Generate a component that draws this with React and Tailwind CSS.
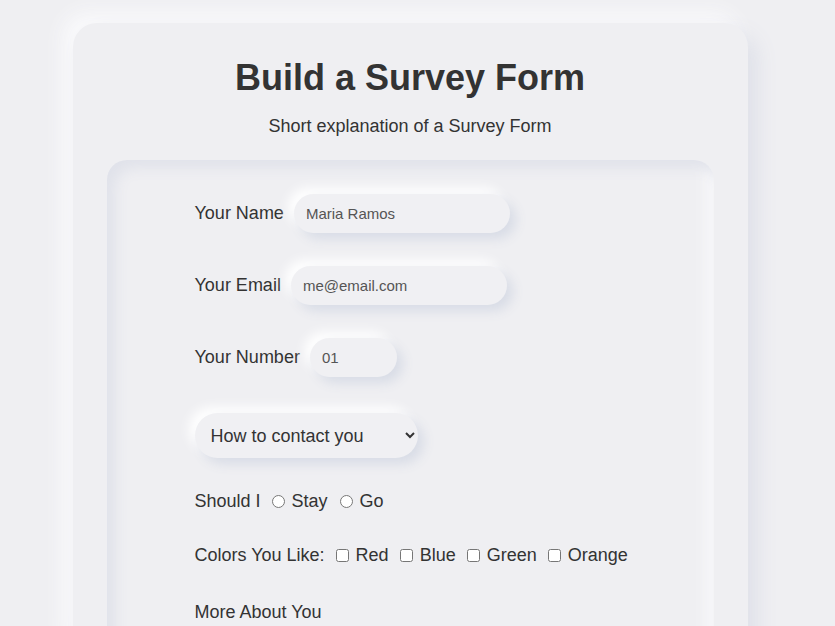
import { useState } from 'react';

const raised = 'shadow-[6px_6px_12px_#d8dce6,-6px_-6px_12px_#ffffff]';

function TextRow({ label, type, value, width }) {
  return (
    <div className="flex items-center">
      <label className="text-[18px] text-[#333] mr-[10px]">{label}</label>
      <input
        type={type}
        defaultValue={value}
        className={`h-[39px] ${width} rounded-full bg-[#f0f0f3] px-[12px] text-[15px] text-[#555] outline-none ${raised}`}
      />
    </div>
  );
}

export default function App() {
  const [contact, setContact] = useState('');

  return (
    <div className="min-h-screen bg-[#efeff2] pt-[23px] pr-[15px] flex justify-center font-['Liberation_Sans',Arial,sans-serif] text-[#333] overflow-hidden">
      <div className="w-[675px] h-[640px] rounded-[24px] bg-[#efeff2] px-[34px] pt-[34px] shadow-[10px_10px_20px_#dfe1e9,-10px_-10px_20px_#fafafc]">
        <h1 className="text-center text-[36px] font-bold leading-[42px] text-[#333]">Build a Survey Form</h1>
        <p className="text-center text-[18px] mt-[14px] text-[#333]">Short explanation of a Survey Form</p>

        <form className="mt-[20px] h-[600px] rounded-[20px] bg-[#efeff2] pl-[88px] pt-[34px] flex flex-col items-start gap-[33px] shadow-[inset_8px_8px_14px_#e0e2ea,inset_-8px_-8px_14px_#f8f8fa]">
          <TextRow label="Your Name" type="text" value="Maria Ramos" width="w-[216px]" />
          <TextRow label="Your Email" type="email" value="me@email.com" width="w-[216px]" />
          <TextRow label="Your Number" type="text" value="01" width="w-[87px]" />

          <select
            value={contact}
            onChange={(e) => setContact(e.target.value)}
            className={`mt-[3px] h-[45px] w-[223px] rounded-full bg-[#f0f0f3] pl-[12px] pr-[10px] text-[18px] text-[#333] outline-none ${raised}`}
          >
            <option value="">How to contact you</option>
            <option value="email">Email</option>
            <option value="phone">Phone</option>
          </select>

          <div className="flex items-center text-[18px] h-[21px]">
            <span>Should I</span>
            <input type="radio" name="stay" className="ml-[11px] mr-[7px] w-[13px] h-[13px]" />
            <span>Stay</span>
            <input type="radio" name="stay" className="ml-[12px] mr-[7px] w-[13px] h-[13px]" />
            <span>Go</span>
          </div>

          <div className="flex items-center text-[18px] h-[21px]">
            <span>Colors You Like:</span>
            {['Red', 'Blue', 'Green', 'Orange'].map((c) => (
              <label key={c} className="flex items-center">
                <input type="checkbox" className="ml-[11px] mr-[7px] w-[13px] h-[13px]" />
                <span>{c}</span>
              </label>
            ))}
          </div>

          <div className="text-[18px] h-[21px]">More About You</div>
        </form>
      </div>
    </div>
  );
}
